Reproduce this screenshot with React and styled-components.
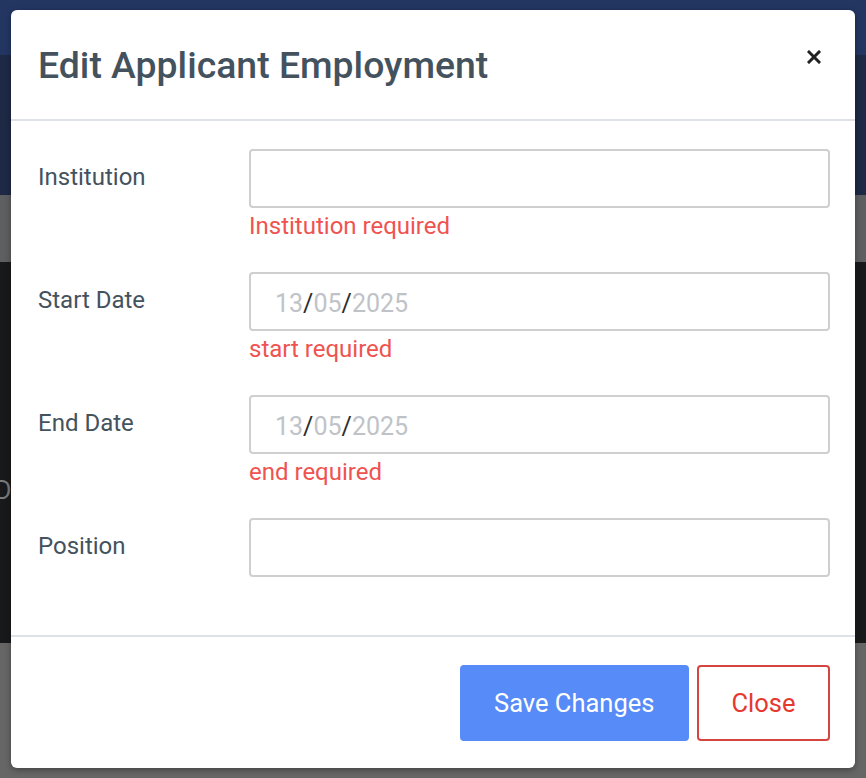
import React from "react";
import styled, { createGlobalStyle } from "styled-components";

const Global = createGlobalStyle`
  html, body { margin: 0; padding: 0; }
  body { font-family: Roboto, "Liberation Sans", Arial, sans-serif; background: #666; overflow: hidden; }
  * { box-sizing: border-box; }
`;

const Page = styled.div`
  width: 866px;
  height: 778px;
  display: flex;
  flex-direction: column;
  position: relative;
  overflow: hidden;
`;

const Band = styled.div`
  height: ${(p) => p.$h}px;
  background: ${(p) => p.$bg};
  flex: none;
  display: flex;
  align-items: flex-start;
`;

const PeekText = styled.span`
  color: #7a7b7d;
  font-size: 25px;
  line-height: 28px;
  margin: 215px 0 0 -5px;
`;

const Modal = styled.div`
  position: absolute;
  top: 10px;
  left: 11px;
  width: 844px;
  height: 758px;
  background: #fff;
  border-radius: 6px;
  box-shadow: 0 2px 6px rgba(0, 0, 0, 0.35);
  display: flex;
  flex-direction: column;
`;

const Header = styled.div`
  height: 111px;
  padding: 0 33px 0 27px;
  display: flex;
  align-items: center;
  justify-content: space-between;
  border-bottom: 2px solid #dee2e6;
  flex: none;
`;

const Title = styled.h2`
  margin: 0;
  font-size: 37.4px;
  font-weight: 500;
  color: #44525e;
`;

const CloseX = styled.button`
  border: none;
  background: none;
  padding: 0;
  width: 16px;
  height: 16px;
  display: flex;
  align-items: center;
  justify-content: center;
  margin-top: -15px;
  cursor: pointer;
`;

const Body = styled.div`
  flex: 1;
  padding: 28px 25px 0 27px;
  display: flex;
  flex-direction: column;
  gap: 29px;
`;

const Row = styled.div`
  display: grid;
  grid-template-columns: 211px 1fr;
`;

const Label = styled.label`
  height: 59px;
  display: flex;
  align-items: center;
  font-size: 24px;
  color: #44525e;
  margin-top: -2px;
`;

const Field = styled.div`
  display: flex;
  flex-direction: column;
`;

const Input = styled.div`
  height: 59px;
  border: 2px solid #cfcfcf;
  border-radius: 4px;
  display: flex;
  align-items: center;
  padding: 4px 0 0 24px;
  font-size: 25px;
`;

const Digits = styled.span`
  color: #bfc3c8;
`;

const Slash = styled.span`
  color: #2c2c2c;
`;

const Error = styled.div`
  font-size: 24px;
  line-height: 33px;
  margin-top: 2px;
  color: #ef5350;
`;

const Footer = styled.div`
  flex: none;
  height: 133px;
  border-top: 2px solid #dee2e6;
  display: flex;
  justify-content: flex-end;
  align-items: center;
  gap: 8px;
  padding: 0 25px 0 0;
`;

const Button = styled.button`
  height: 76px;
  font-family: inherit;
  font-size: 25.5px;
  border-radius: 4px;
  padding: 0 32.5px;
  cursor: pointer;
  border: 2px solid ${(p) => (p.$variant === "primary" ? "#578bf7" : "#d5453f")};
  background: ${(p) => (p.$variant === "primary" ? "#578bf7" : "#fff")};
  color: ${(p) => (p.$variant === "primary" ? "#fff" : "#e5392f")};
`;

const DateValue = () => (
  <>
    <Digits>13</Digits>
    <Slash>/</Slash>
    <Digits>05</Digits>
    <Slash>/</Slash>
    <Digits>2025</Digits>
  </>
);

const fields = [
  { label: "Institution", error: "Institution required" },
  { label: "Start Date", error: "start required", date: true },
  { label: "End Date", error: "end required", date: true },
  { label: "Position" },
];

export default function App() {
  return (
    <>
      <Global />
      <Page>
        <Band $h={55} $bg="#233662" />
        <Band $h={140} $bg="#1e2946" />
        <Band $h={67} $bg="#5e5f60" />
        <Band $h={381} $bg="#18191b">
          <PeekText>D</PeekText>
        </Band>
        <Band $h={135} $bg="#666666" />
        <Modal>
          <Header>
            <Title>Edit Applicant Employment</Title>
            <CloseX aria-label="close">
              <svg width="14" height="14" viewBox="0 0 14 14">
                <path d="M2 2 L12 12 M12 2 L2 12" stroke="#222" strokeWidth="3" strokeLinecap="square" />
              </svg>
            </CloseX>
          </Header>
          <Body>
            {fields.map((f) => (
              <Row key={f.label}>
                <Label>{f.label}</Label>
                <Field>
                  <Input>{f.date ? <DateValue /> : null}</Input>
                  {f.error && <Error>{f.error}</Error>}
                </Field>
              </Row>
            ))}
          </Body>
          <Footer>
            <Button $variant="primary">Save Changes</Button>
            <Button $variant="outline">Close</Button>
          </Footer>
        </Modal>
      </Page>
    </>
  );
}
